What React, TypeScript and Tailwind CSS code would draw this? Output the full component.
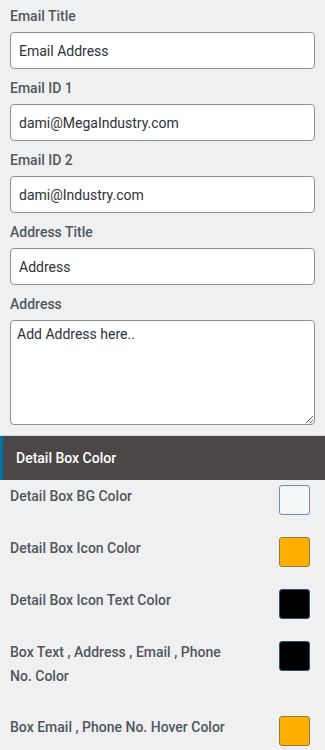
import React from 'react';

const font = { fontFamily: 'Roboto, "Noto Sans", Arial, sans-serif' };

function Field({ label, value }: { label: string; value: string }) {
  return (
    <div className="flex flex-col mb-[9px]">
      <label className="h-[20px] leading-[20px] mb-[6px] text-[14px] font-medium text-[#50575e]">{label}</label>
      <input
        type="text"
        defaultValue={value}
        className="h-[37px] w-full rounded-[4px] border border-[#8c8f94] bg-white px-[8px] text-[14px] text-[#2c3338] outline-none"
      />
    </div>
  );
}

const swatches = [
  { label: 'Detail Box BG Color', fill: 'bg-[#f6f7f7]', border: 'border-[#6b8fb5]' },
  { label: 'Detail Box Icon Color', fill: 'bg-[#ffb000]', border: 'border-[#8a7c3c]' },
  { label: 'Detail Box Icon Text Color', fill: 'bg-black', border: 'border-[#2d4f73]' },
  { label: 'Box Text , Address , Email , Phone No. Color', fill: 'bg-black', border: 'border-[#2d4f73]' },
  { label: 'Box Email , Phone No. Hover Color', fill: 'bg-[#ffb000]', border: 'border-[#8a7c3c]' },
];

export default function App() {
  return (
    <div className="min-h-[750px] w-[325px] bg-[#f0f0f0]" style={font}>
      <div className="px-[10px] pt-[6px]">
        <Field label="Email Title" value="Email Address" />
        <Field label="Email ID 1" value="dami@MegaIndustry.com" />
        <Field label="Email ID 2" value="dami@Industry.com" />
        <Field label="Address Title" value="Address" />
        <div className="flex flex-col">
          <label className="h-[20px] leading-[20px] mb-[6px] text-[14px] font-medium text-[#50575e]">Address</label>
          <textarea
            defaultValue="Add Address here.."
            className="h-[105px] w-full rounded-[4px] border border-[#8c8f94] bg-white px-[6px] py-[3px] text-[14px] text-[#2c3338] outline-none"
          />
        </div>
      </div>

      <div className="mt-[10px] border-t border-[#dcdcde]">
        <div className="flex h-[44px] items-center border-l-[3px] border-[#0073aa] bg-[#4b4746] pl-[13px] text-[14px] font-medium text-white">
          Detail Box Color
        </div>
      </div>

      <div className="px-[10px]">
        {swatches.map((s) => (
          <div key={s.label} className="flex items-start justify-between pt-[5px] pb-[17px]">
            <div className="mt-[-1px] w-[230px] pb-[6px] text-[14px] font-medium leading-[24px] text-[#50575e]">{s.label}</div>
            <div className={'mr-[5px] h-[30px] w-[31px] rounded-[3px] border ' + s.fill + ' ' + s.border} />
          </div>
        ))}
      </div>
    </div>
  );
}
